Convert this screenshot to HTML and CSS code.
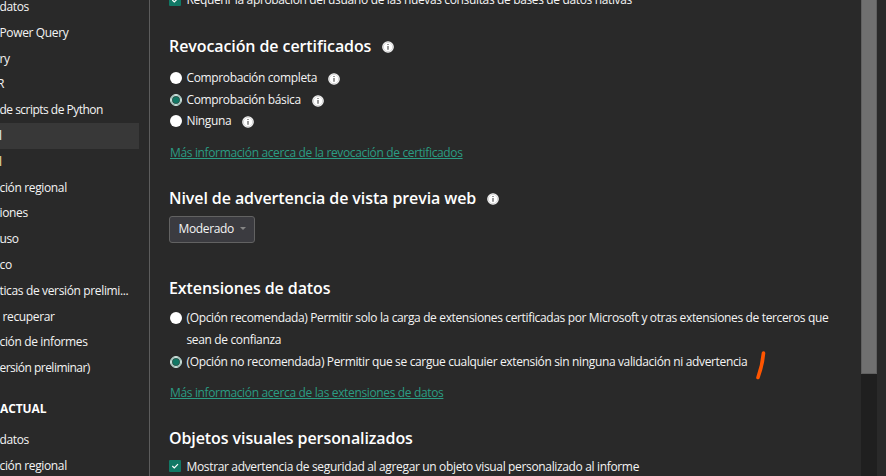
FILE: index.html
```html
<!DOCTYPE html>
<html lang="es">
<head>
<meta charset="utf-8">
<title>Opciones</title>
<link rel="stylesheet" href="styles.css">
</head>
<body>
<svg class="defs" width="0" height="0">
  <symbol id="info" viewBox="0 0 12 12"><circle cx="6" cy="6" r="5.8" fill="#fff"/><circle cx="6" cy="6" r="4.7" fill="none" stroke="#aaa" stroke-width=".5"/><path d="M6 5v3.8M6 2.9v1.2" stroke="#555" stroke-width="1.2"/></symbol>
  <symbol id="check" viewBox="0 0 12 12"><rect width="12" height="12" rx="1" fill="#117865"/><path d="M3.3 6l2 2L9 4.2" fill="none" stroke="#fff" stroke-width="1.2"/></symbol>
</svg>
<div class="window">
  <nav class="sidebar">
    <ul class="list">
      <li class="item">datos</li>
      <li class="item">Power Query</li>
      <li class="item cut-e">ery</li>
      <li class="item cut-r">R</li>
      <li class="item tight">de scripts de Python</li>
      <li class="item cut-l active">l</li>
      <li class="item cut-l warm">l</li>
      <li class="item">ción regional</li>
      <li class="item">iones</li>
      <li class="item">uso</li>
      <li class="item">co</li>
      <li class="item">ticas de versión prelimi...</li>
      <li class="item indent">recuperar</li>
      <li class="item">ción de informes</li>
      <li class="item tight">ersión preliminar)</li>
    </ul>
    <h3 class="group">ACTUAL</h3>
    <ul class="list">
      <li class="item">datos</li>
      <li class="item">ción regional</li>
    </ul>
  </nav>
  <main class="content">
    <div class="row first"><svg class="box"><use href="#check"/></svg><span>Requerir la aprobación del usuario de las nuevas consultas de bases de datos nativas</span></div>
    <section class="section revocation">
      <h2>Revocación de certificados<svg class="info"><use href="#info"/></svg></h2>
      <div class="row"><i class="radio"></i><span>Comprobación completa</span><svg class="info"><use href="#info"/></svg></div>
      <div class="row"><i class="radio on"></i><span>Comprobación básica</span><svg class="info"><use href="#info"/></svg></div>
      <div class="row"><i class="radio"></i><span>Ninguna</span><svg class="info"><use href="#info"/></svg></div>
      <a class="link">Más información acerca de la revocación de certificados</a>
    </section>
    <section class="section preview">
      <h2>Nivel de advertencia de vista previa web<svg class="info"><use href="#info"/></svg></h2>
      <div class="select"><span>Moderado</span><i class="caret"></i></div>
    </section>
    <section class="section extensions">
      <h2>Extensiones de datos</h2>
      <div class="row"><i class="radio"></i><span>(Opción recomendada) Permitir solo la carga de extensiones certificadas por Microsoft y otras extensiones de terceros que<br>sean de confianza</span></div>
      <div class="row marked"><i class="radio on"></i><span>(Opción no recomendada) Permitir que se cargue cualquier extensión sin ninguna validación ni advertencia</span><svg class="mark" viewBox="0 0 12 32"><path d="M9.500 4Q8.500 16 4 28.500" fill="none" stroke="#ff5500" stroke-width="3.600" stroke-linecap="round"/></svg></div>
      <a class="link">Más información acerca de las extensiones de datos</a>
    </section>
    <section class="section visuals">
      <h2>Objetos visuales personalizados</h2>
      <div class="row"><svg class="box"><use href="#check"/></svg><span>Mostrar advertencia de seguridad al agregar un objeto visual personalizado al informe</span></div>
    </section>
  </main>
  <div class="scrollbar"><div class="thumb"></div></div>
</div>
</body>
</html>
```
FILE: styles.css
```css
* { box-sizing: border-box; }
body {
  margin: 0;
  background: #292929;
  color: #f4f4f4;
  font: 12px/22px "Open Sans", "Noto Sans", sans-serif;
  letter-spacing: -0.355px;
  overflow: hidden;
}
.defs { position: absolute; }
.window { display: flex; width: 886px; height: 476px; overflow: hidden; }
.sidebar { width: 150px; flex: none; border-right: 1px solid #5c5c5c; overflow: hidden; }
.list { list-style: none; margin: 0; padding: 0; }
.sidebar .list:first-child { margin-top: -6px; }
.item { height: 25.8px; line-height: 26.4px; width: 139px; white-space: nowrap; text-indent: -0.5px; }
.tight { letter-spacing: -0.52px; }
.cut-e { text-indent: -7px; }
.cut-r { text-indent: -3px; }
.cut-l { text-indent: -1px; }
.indent { padding-left: 3px; }
.active { background: #383838; }
.warm { color: #ffe0a0; }
.group { margin: 15px 0 6px; font-size: 12px; line-height: 25px; font-weight: 700; letter-spacing: -0.1px; color: #fff; }
.content { width: 711px; flex: none; padding-left: 19px; }
.row { display: flex; align-items: flex-start; min-height: 22px; white-space: nowrap; }
.first { height: 22px; margin-top: -11px; }
.box { width: 12px; height: 12px; flex: none; margin: 5px 5.5px 0 0; }
.radio { width: 12px; height: 12px; flex: none; margin: 5px 4.5px 0 1px; border-radius: 50%; background: #fff; }
.radio.on { background: #117865; border: 1px solid #d6e6e2; box-shadow: inset 0 0 0 1px #d6e6e2, inset 0 0 0 2px #2b5a50; }
.info { width: 12px; height: 12px; flex: none; }
.row .info { margin: 6px 0 0 11px; }
h2 { display: flex; align-items: center; margin: 0; height: 24px; font-size: 16px; line-height: 24px; font-weight: 600; letter-spacing: -0.09px; color: #fff; white-space: nowrap; }
h2 .info { margin: 1px 0 0 11px; }
.link { display: block; width: max-content; margin-left: 1px; color: #2b9c83; text-decoration: underline; }
.revocation { margin-top: 23px; height: 152px; }
.revocation h2 { margin-bottom: 9px; }
.revocation .row { height: 21.7px; min-height: 0; }
.revocation .link { margin-top: 10.4px; }
.preview { height: 89px; }
.select { display: flex; align-items: center; justify-content: space-between; width: 86px; height: 27px; margin-top: 6px; padding: 0 8px 2px 8.5px; border: 1px solid #626262; border-radius: 3px; background: #3b3b40; }
.caret { border: 3px solid transparent; border-top-color: #858585; border-bottom: 0; }
.extensions { height: 151px; padding-top: 1px; }
.extensions h2 { margin-bottom: 7px; }
.extensions .link { margin-top: 9px; }
.mark { width: 12px; height: 32px; margin: -2px 0 -12px 7px; }
.visuals .row { margin-top: 5px; }
.visuals .row span { line-height: 23px; letter-spacing: -0.345px; }
.scrollbar { width: 16px; height: 476px; flex: none; background: #1f1f1f; }
.thumb { height: 374px; background: #707070; border: solid #606060; border-width: 0 1px 1px; }
```
